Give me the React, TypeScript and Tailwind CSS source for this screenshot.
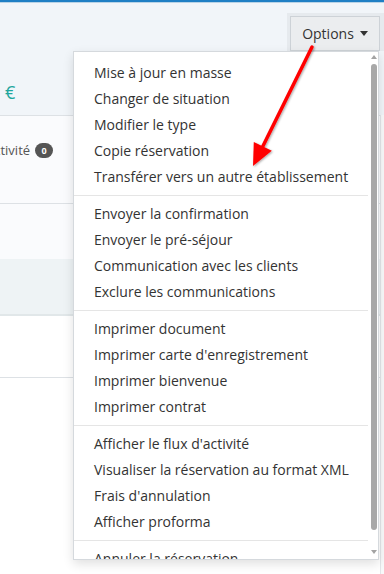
import React from 'react';

const groups: string[][] = [
  [
    'Mise à jour en masse',
    'Changer de situation',
    'Modifier le type',
    'Copie réservation',
    'Transférer vers un autre établissement',
  ],
  [
    'Envoyer la confirmation',
    'Envoyer le pré-séjour',
    'Communication avec les clients',
    'Exclure les communications',
  ],
  [
    'Imprimer document',
    "Imprimer carte d'enregistrement",
    'Imprimer bienvenue',
    'Imprimer contrat',
  ],
  [
    "Afficher le flux d'activité",
    'Visualiser la réservation au format XML',
    "Frais d'annulation",
    'Afficher proforma',
  ],
  ['Annuler la réservation'],
];

function OptionsMenu() {
  return (
    <div className="absolute left-[73px] top-[51px] w-[306px] h-[509px] bg-white border border-[#d5d9dd] shadow-[0_4px_10px_rgba(0,0,0,0.12)] flex overflow-hidden">
      {/* Items */}
      <ul className="w-[294px] pt-[8px] text-[14px] text-[#333] leading-[26px]">
        {groups.map((items, gi) => (
          <React.Fragment key={gi}>
            {gi > 0 && <li className="h-px my-[5px] bg-[#e5e5e5]" />}
            {items.map((label) => (
              <li key={label} className="pl-[20px] h-[26px] whitespace-nowrap">
                {label}
              </li>
            ))}
          </React.Fragment>
        ))}
      </ul>

      {/* Fake scrollbar */}
      <div className="w-[10px] flex flex-col items-center pt-[3px] pl-[2px]">
        <div className="w-0 h-0 border-l-[3px] border-r-[3px] border-b-[4px] border-l-transparent border-r-transparent border-b-[#a3a3a3]" />
        <div className="mt-[5px] w-[6px] h-[466px] rounded-[3px] bg-[#a8a8a8]" />
        <div className="mt-[20px] w-0 h-0 border-l-[3px] border-r-[3px] border-t-[4px] border-l-transparent border-r-transparent border-t-[#a3a3a3]" />
      </div>
    </div>
  );
}

export default function App() {
  return (
    <div
      className="relative w-[384px] h-[574px] overflow-hidden bg-white"
      style={{ fontFamily: '"Open Sans", "Noto Sans", sans-serif' }}
    >
      {/* Top accent */}
      <div className="h-[2px] bg-[#1f7fc4]" />
      <div className="h-px bg-[#b9d3e6]" />

      {/* Header */}
      <div className="h-[112px] bg-[#f1f5f9] flex flex-col">
        <div className="flex justify-end pt-[10px]">
          <div className="bg-[#e6eaee] pl-[3px] pr-[4px] pt-[3px]">
            <button className="h-[35px] w-[90px] border border-[#cdd2d7] bg-[#ebedef] flex items-center justify-center gap-[6px] text-[14px] text-[#333]">
              Options
              <span className="w-0 h-0 border-l-[4px] border-r-[4px] border-t-[5px] border-l-transparent border-r-transparent border-t-[#333]" />
            </button>
          </div>
        </div>
        <div className="mt-[29px] overflow-hidden text-[18px] text-[#1fa69d] leading-[24px]">
          <span className="-ml-[10px] whitespace-nowrap">0 €</span>
        </div>
      </div>

      {/* Body rows */}
      <div className="flex">
        <div className="flex-1">
          <div className="h-[88px] bg-[#fafbfd] border-t border-[#dde1e5] flex items-center overflow-hidden pb-[18px]">
            <span className="-ml-[14px] text-[13px] text-[#555] whitespace-nowrap">Activité</span>
            <span className="ml-[5px] h-[15px] min-w-[18px] px-[5px] rounded-full bg-[#555] text-white text-[9px] font-bold flex items-center justify-center">
              0
            </span>
          </div>
          <div className="h-[56px] bg-[#fafbfd] border-t border-[#dde1e5]" />
          <div className="h-[57px] bg-[#eef3f5] border-b-2 border-[#e1e7e9]" />
          <div className="h-[62px] bg-white border-b border-[#dde1e5]" />
        </div>
        <div className="w-[4px] h-[460px] border-l border-[#e3e6e9] bg-[#f8f9fa]" />
      </div>

      <OptionsMenu />

      {/* Annotation arrow */}
      <svg className="absolute inset-0 pointer-events-none" width="384" height="574" viewBox="0 0 384 574">
        <defs>
          <filter id="sh" x="-20%" y="-20%" width="140%" height="140%">
            <feDropShadow dx="1" dy="1" stdDeviation="1" floodColor="#000" floodOpacity="0.35" />
          </filter>
        </defs>
        <g filter="url(#sh)">
          <line x1="312" y1="47" x2="262" y2="148" stroke="#ff0000" strokeWidth="3.5" strokeLinecap="round" />
          <polygon points="253,166 253.8,141.9 271.8,150.7" fill="#ff0000" />
        </g>
      </svg>
    </div>
  );
}
